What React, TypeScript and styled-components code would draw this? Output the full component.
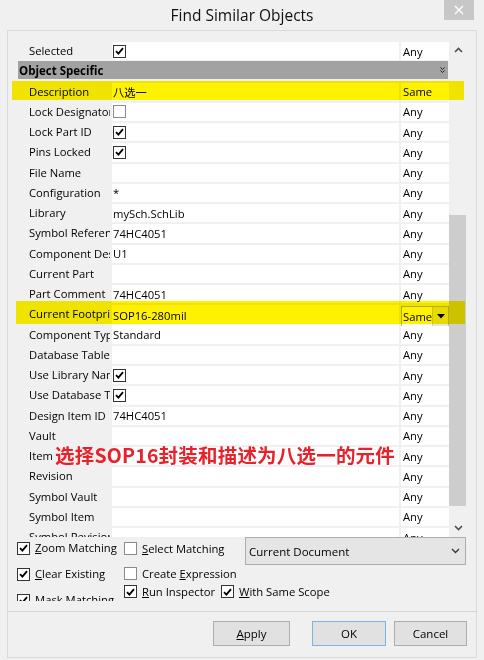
import React from 'react';
import styled, { createGlobalStyle, css } from 'styled-components';

const GlobalStyle = createGlobalStyle`
  html, body { margin: 0; padding: 0; background: #f0f0f0; }
  body {
    font-family: "Open Sans", "Noto Sans CJK SC", sans-serif;
    font-size: 11.25px;
    color: #000;
  }
  * { box-sizing: border-box; }
`;

const Window = styled.div`
  position: relative;
  width: 484px;
  height: 660px;
  background: #f0f0f0;
  display: flex;
  flex-direction: column;
  overflow: hidden;
`;

const TitleBar = styled.div`
  height: 30px;
  flex: none;
  display: grid;
  grid-template-columns: 1fr auto 1fr;
  align-items: start;
`;

const Title = styled.div`
  grid-column: 2;
  font-size: 15.5px;
  line-height: 30px;
  color: #111;
`;

const CloseButton = styled.div`
  grid-column: 3;
  justify-self: end;
  margin-right: 10px;
  width: 30px;
  height: 20px;
  background: #c7c7c7;
  display: flex;
  align-items: center;
  justify-content: center;
`;

const Client = styled.div`
  flex: 1;
  margin: 0 7px 2px 7px;
  border: 1px solid #dadada;
  display: flex;
  flex-direction: column;
`;

const TopSection = styled.div`
  height: 580px;
  flex: none;
  padding: 10px 9px 0 0;
  display: flex;
  flex-direction: column;
`;

const GridArea = styled.div`
  margin-left: 10px;
  height: 496px;
  display: flex;
`;

const GridBody = styled.div`
  flex: 1;
  overflow: hidden;
`;

const Row = styled.div`
  height: 20.25px;
  display: grid;
  grid-template-columns: 92px 287px 48px;
  column-gap: 2px;
`;

const LabelCell = styled.div`
  padding-left: 11px;
  line-height: 19.5px;
  white-space: nowrap;
  overflow: hidden;
`;

const ValueCell = styled.div`
  margin: 1px 0;
  background: #fff;
  padding-left: 1px;
  display: flex;
  align-items: center;
  white-space: nowrap;
  overflow: hidden;
`;

const MatchCell = styled.div<{ $editing?: boolean }>`
  margin: 1px 0;
  background: #fff;
  padding-left: 2px;
  display: flex;
  align-items: center;
  white-space: nowrap;
  ${(p) =>
    p.$editing &&
    css`
      margin: 2px 0 0 0;
      height: 21px;
      border: 1px solid #b8b8b8;
      padding-left: 1px;
      justify-content: space-between;
    `}
`;

const DropButton = styled.div`
  width: 16px;
  height: 100%;
  background: #e6e6e6;
  border-left: 1px solid #d0d0d0;
  display: flex;
  align-items: center;
  justify-content: center;
`;

const HeaderRow = styled.div`
  height: 20.25px;
  padding: 0 0 2.25px 0;
`;

const HeaderBar = styled.div`
  width: 430px;
  height: 18px;
  background: #a2a2a2;
  display: flex;
  align-items: center;
  justify-content: space-between;
  padding: 0 3px 0 1px;
  font-weight: 700;
  font-size: 11.5px;
`;

const Box = styled.div<{ $checked?: boolean }>`
  width: 13px;
  height: 13px;
  flex: none;
  border: 1px solid ${(p) => (p.$checked ? '#333' : '#8a8a8a')};
  background: #fff;
  display: flex;
  align-items: center;
  justify-content: center;
`;

const ScrollBar = styled.div`
  width: 18px;
  display: flex;
  flex-direction: column;
`;

const ScrollArrow = styled.div`
  height: 18px;
  flex: none;
  display: flex;
  align-items: center;
  justify-content: center;
`;

const ScrollTrack = styled.div`
  flex: 1;
  display: flex;
  flex-direction: column;
`;

const Thumb = styled.div`
  margin-top: 156px;
  width: 17px;
  height: 291px;
  background: #cdcdcd;
`;

const Options = styled.div`
  margin-left: 9px;
  height: 64px;
  overflow: hidden;
  display: flex;
`;

const OptColumn = styled.div`
  width: 107px;
  flex: none;
  padding-top: 4px;
  display: flex;
  flex-direction: column;
  gap: 12px;
`;

const OptStack = styled.div`
  display: flex;
  flex-direction: column;
`;

const OptRow = styled.div<{ $mt?: number; $gap?: number }>`
  display: flex;
  align-items: flex-start;
  margin-top: ${(p) => p.$mt ?? 0}px;
  gap: ${(p) => p.$gap ?? 0}px;
`;

const OptItem = styled.label<{ $w?: number; $mt?: number }>`
  height: 15px;
  display: flex;
  align-items: center;
  gap: 5px;
  white-space: nowrap;
  line-height: 14px;
  ${(p) => (p.$w ? `width: ${p.$w}px; flex: none;` : '')}
  margin-top: ${(p) => p.$mt ?? 0}px;
`;

const Combo = styled.div`
  width: 221px;
  height: 28px;
  background: #e5e5e5;
  border: 1px solid #adadad;
  display: flex;
  align-items: center;
  justify-content: space-between;
  padding: 0 5px 0 3px;
  font-size: 11.5px;
`;

const Footer = styled.div`
  flex: 1;
  border-top: 1px solid #d4d4d4;
  display: flex;
  justify-content: flex-end;
  align-items: flex-start;
  padding: 9px 9px 0 0;
`;

const Button = styled.div<{ $w: number; $mr?: number; $default?: boolean }>`
  width: ${(p) => p.$w}px;
  height: 25px;
  margin-right: ${(p) => p.$mr ?? 0}px;
  background: #e1e1e1;
  border: 1px solid ${(p) => (p.$default ? '#7ab4e6' : '#adadad')};
  display: flex;
  align-items: center;
  justify-content: center;
  font-size: 11.5px;
`;

const Highlight = styled.div<{ $x: number; $y: number; $w: number; $h: number }>`
  position: absolute;
  left: ${(p) => p.$x}px;
  top: ${(p) => p.$y}px;
  width: ${(p) => p.$w}px;
  height: ${(p) => p.$h}px;
  background: #fff200;
  mix-blend-mode: multiply;
  pointer-events: none;
`;

const Annotation = styled.div`
  position: absolute;
  left: 55px;
  top: 445px;
  font-family: "Noto Sans CJK SC", sans-serif;
  font-weight: 700;
  font-size: 19.5px;
  line-height: 20px;
  letter-spacing: 0.2px;
  color: #e8222b;
  white-space: nowrap;
`;

const Check = () => (
  <svg width="9" height="8" viewBox="0 0 9 8">
    <path d="M1 4.2 L3.4 6.6 L8 1.2" fill="none" stroke="#000" strokeWidth="1.8" />
  </svg>
);

const CheckBox = ({ checked }: { checked?: boolean }) => (
  <Box $checked={checked}>{checked && <Check />}</Box>
);

type Value = { text?: string; check?: boolean };
type RowData = { label: string; value: Value; match?: 'Any' | 'Same' | 'Edit' };

const rows: RowData[] = [
  { label: 'Description', value: { text: '八选一' }, match: 'Same' },
  { label: 'Lock Designator', value: { check: false } },
  { label: 'Lock Part ID', value: { check: true } },
  { label: 'Pins Locked', value: { check: true } },
  { label: 'File Name', value: { text: '' } },
  { label: 'Configuration', value: { text: '*' } },
  { label: 'Library', value: { text: 'mySch.SchLib' } },
  { label: 'Symbol Reference', value: { text: '74HC4051' } },
  { label: 'Component Designator', value: { text: 'U1' } },
  { label: 'Current Part', value: { text: '' } },
  { label: 'Part Comment', value: { text: '74HC4051' } },
  { label: 'Current Footprint', value: { text: 'SOP16-280mil' }, match: 'Edit' },
  { label: 'Component Type', value: { text: 'Standard' } },
  { label: 'Database Table', value: { text: '' } },
  { label: 'Use Library Name', value: { check: true } },
  { label: 'Use Database Table', value: { check: true } },
  { label: 'Design Item ID', value: { text: '74HC4051' } },
  { label: 'Vault', value: { text: '' } },
  { label: 'Item', value: { text: '' } },
  { label: 'Revision', value: { text: '' } },
  { label: 'Symbol Vault', value: { text: '' } },
  { label: 'Symbol Item', value: { text: '' } },
  { label: 'Symbol Revision', value: { text: '' } },
];

const GridRow = ({ label, value, match = 'Any' }: RowData) => (
  <Row>
    <LabelCell>{label}</LabelCell>
    <ValueCell>
      {value.check !== undefined ? <CheckBox checked={value.check} /> : value.text}
    </ValueCell>
    {match === 'Edit' ? (
      <MatchCell $editing>
        Same
        <DropButton>
          <svg width="8" height="5" viewBox="0 0 8 5">
            <path d="M0 0 H8 L4 4.5 Z" fill="#000" />
          </svg>
        </DropButton>
      </MatchCell>
    ) : (
      <MatchCell>{match}</MatchCell>
    )}
  </Row>
);

export default function App() {
  return (
    <>
      <GlobalStyle />
      <Window>
        <TitleBar>
          <Title>Find Similar Objects</Title>
          <CloseButton>
            <svg width="10" height="10" viewBox="0 0 10 10">
              <path d="M1 1 L9 9 M9 1 L1 9" stroke="#fff" strokeWidth="1.4" />
            </svg>
          </CloseButton>
        </TitleBar>
        <Client>
          <TopSection>
            <GridArea>
              <GridBody>
                <GridRow label="Selected" value={{ check: true }} />
                <HeaderRow>
                  <HeaderBar>
                    <span>Object Specific</span>
                    <svg width="5" height="6" viewBox="0 0 5 6">
                      <path d="M0.5 0.5 L2.5 2.5 L4.5 0.5 M0.5 3.5 L2.5 5.5 L4.5 3.5" fill="none" stroke="#222" strokeWidth="1" />
                    </svg>
                  </HeaderBar>
                </HeaderRow>
                {rows.map((r) => (
                  <GridRow key={r.label} {...r} />
                ))}
              </GridBody>
              <ScrollBar>
                <ScrollArrow>
                  <svg width="9" height="6" viewBox="0 0 9 6">
                    <path d="M1 5 L4.5 1.5 L8 5" fill="none" stroke="#505050" strokeWidth="1.6" />
                  </svg>
                </ScrollArrow>
                <ScrollTrack>
                  <Thumb />
                </ScrollTrack>
                <ScrollArrow>
                  <svg width="9" height="6" viewBox="0 0 9 6">
                    <path d="M1 1 L4.5 4.5 L8 1" fill="none" stroke="#505050" strokeWidth="1.6" />
                  </svg>
                </ScrollArrow>
              </ScrollBar>
            </GridArea>
            <Options>
              <OptColumn>
                <OptItem>
                  <CheckBox checked />
                  <span><u>Z</u>oom Matching</span>
                </OptItem>
                <OptItem>
                  <CheckBox checked />
                  <span><u>C</u>lear Existing</span>
                </OptItem>
                <OptItem>
                  <CheckBox checked />
                  <span><u>M</u>ask Matching</span>
                </OptItem>
              </OptColumn>
              <OptStack>
                <OptRow>
                  <OptItem $w={121} $mt={4}>
                    <CheckBox />
                    <span><u>S</u>elect Matching</span>
                  </OptItem>
                  <Combo>
                    <span>Current Document</span>
                    <svg width="9" height="6" viewBox="0 0 9 6">
                      <path d="M1 1 L4.5 4.5 L8 1" fill="none" stroke="#333" strokeWidth="1.3" />
                    </svg>
                  </Combo>
                </OptRow>
                <OptRow $mt={1}>
                  <OptItem>
                    <CheckBox />
                    <span>Create <u>E</u>xpression</span>
                  </OptItem>
                </OptRow>
                <OptRow $mt={3} $gap={6}>
                  <OptItem>
                    <CheckBox checked />
                    <span><u>R</u>un Inspector</span>
                  </OptItem>
                  <OptItem>
                    <CheckBox checked />
                    <span><u>W</u>ith Same Scope</span>
                  </OptItem>
                </OptRow>
              </OptStack>
            </Options>
          </TopSection>
          <Footer>
            <Button $w={77} $mr={22}>
              <span><u>A</u>pply</span>
            </Button>
            <Button $w={74} $mr={8} $default>
              OK
            </Button>
            <Button $w={73}>Cancel</Button>
          </Footer>
        </Client>
        <Highlight $x={12} $y={81} $w={452} $h={19} />
        <Highlight $x={16} $y={301} $w={449} $h={23} />
        <Annotation>选择SOP16封装和描述为八选一的元件</Annotation>
      </Window>
    </>
  );
}
